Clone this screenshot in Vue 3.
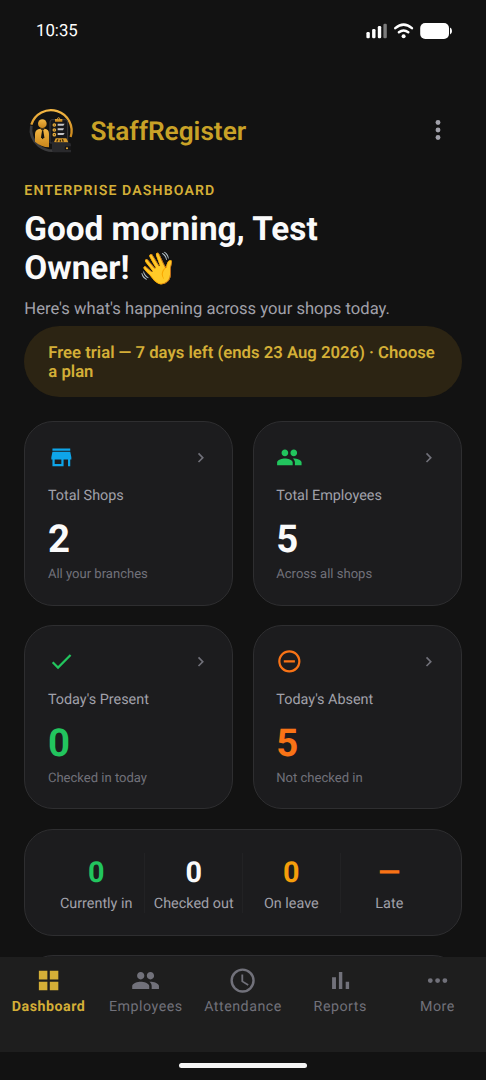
<script setup>
const paths = {
  store: 'M12,18H6V14H12M21,14V12L20,7H4L3,12V14H4V20H14V14H18V20H20V14M20,4H4V6H20V4Z',
  people:
    'M16 11c1.66 0 2.99-1.34 2.99-3S17.66 5 16 5c-1.66 0-3 1.34-3 3s1.34 3 3 3zm-8 0c1.66 0 2.99-1.34 2.99-3S9.66 5 8 5C6.34 5 5 6.34 5 8s1.34 3 3 3zm0 2c-2.33 0-7 1.17-7 3.5V19h14v-2.5c0-2.33-4.67-3.5-7-3.5zm8 0c-.29 0-.62.02-.97.05 1.16.84 1.97 1.97 1.97 3.45V19h6v-2.5c0-2.33-4.67-3.5-7-3.5z',
  check: 'M21,7L9,19L3.5,13.5L4.91,12.09L9,16.17L19.59,5.59L21,7Z',
  minus:
    'M12,20C7.59,20 4,16.41 4,12C4,7.59 7.59,4 12,4C16.41,4 20,7.59 20,12C20,16.41 16.41,20 12,20M12,2A10,10 0 0,0 2,12A10,10 0 0,0 12,22A10,10 0 0,0 22,12A10,10 0 0,0 12,2M7,13H17V11H7',
  chevron: 'M8.59,16.58L13.17,12L8.59,7.41L10,6L16,12L10,18L8.59,16.58Z',
  grid: 'M4,4H11V11H4M13,4H20V11H13M4,13H11V20H4M13,13H20V20H13',
  clock:
    'M12,20A8,8 0 0,0 20,12A8,8 0 0,0 12,4A8,8 0 0,0 4,12A8,8 0 0,0 12,20M12,2A10,10 0 0,1 22,12A10,10 0 0,1 12,22C6.47,22 2,17.5 2,12A10,10 0 0,1 12,2M12.5,7V12.25L17,14.92L16.25,16.15L11,13V7H12.5Z',
  chart: 'M5 9.2h3.2V19H5V9.2zM10.6 5h2.8v14h-2.8V5zm5.6 8H19v6h-2.8v-6z',
  more: 'M16,12A2,2 0 0,1 18,10A2,2 0 0,1 20,12A2,2 0 0,1 18,14A2,2 0 0,1 16,12M10,12A2,2 0 0,1 12,10A2,2 0 0,1 14,12A2,2 0 0,1 12,14A2,2 0 0,1 10,12M4,12A2,2 0 0,1 6,10A2,2 0 0,1 8,12A2,2 0 0,1 6,14A2,2 0 0,1 4,12Z',
}

const cards = [
  { icon: 'store', tone: 'blue', label: 'Total Shops', value: '2', valueTone: 'white', note: 'All your branches' },
  { icon: 'people', tone: 'green', label: 'Total Employees', value: '5', valueTone: 'white', note: 'Across all shops' },
  { icon: 'check', tone: 'green', label: "Today's Present", value: '0', valueTone: 'green', note: 'Checked in today' },
  { icon: 'minus', tone: 'orange', label: "Today's Absent", value: '5', valueTone: 'orange', note: 'Not checked in' },
]

const stats = [
  { value: '0', tone: 'green', label: 'Currently in' },
  { value: '0', tone: 'white', label: 'Checked out' },
  { value: '0', tone: 'amber', label: 'On leave' },
  { value: '—', tone: 'orange', label: 'Late' },
]

const tabs = [
  { icon: 'grid', label: 'Dashboard', active: true },
  { icon: 'people', label: 'Employees' },
  { icon: 'clock', label: 'Attendance' },
  { icon: 'chart', label: 'Reports' },
  { icon: 'more', label: 'More' },
]
</script>

<template>
  <div class="screen">
    <div class="status">
      <span class="time">10:35</span>
      <svg class="status-icons" width="88" height="18" viewBox="0 0 88 18">
        <g fill="#fff">
          <rect x="1.4" y="10" width="3.4" height="6.2" rx="1.3" />
          <rect x="7.1" y="7" width="3.4" height="9.2" rx="1.3" />
          <rect x="12.8" y="4" width="3.4" height="12.2" rx="1.3" />
          <rect x="18.4" y="1.8" width="3.4" height="14.4" rx="1.3" fill="#7c7c7c" />
          <circle cx="38.6" cy="14.2" r="2" />
          <rect x="55.2" y="1" width="28.8" height="16" rx="5" />
          <path d="M85 5.4q2 .6 2 3.6t-2 3.6z" />
        </g>
        <g fill="none" stroke="#fff" stroke-width="2.5" stroke-linecap="round">
          <path d="M30.3 6.1Q38.6-.8 46.9 6.1" />
          <path d="M33.9 10.3q4.7-3.7 9.4 0" />
        </g>
      </svg>
    </div>

    <header class="header">
      <svg class="logo" width="48" height="48" viewBox="21 18 144 144">
        <defs>
          <linearGradient id="gold" x1="0" y1="0" x2="0" y2="1">
            <stop offset="0" stop-color="#f4b744" />
            <stop offset="1" stop-color="#c9861b" />
          </linearGradient>
        </defs>
        <path d="M34 74A61 61 0 1 1 152 111" fill="none" stroke="url(#gold)" stroke-width="7" />
        <path d="M34 77Q27 112 57 138Q77 153 100 152" fill="none" stroke="#3b3b3d" stroke-width="8" />
        <circle cx="67" cy="71" r="13" fill="url(#gold)" />
        <path d="M45 125V101Q46 88 61 86H74Q87 87 87 101V142Q63 141 45 125Z" fill="url(#gold)" />
        <path d="M61 86h13l-6 8z" fill="#3a2a12" />
        <path d="M66 93h4l3 19-5 6-5-6z" fill="#16130f" />
        <path d="M96 59H136Q143 59 143 66V129H90V66Q90 59 96 59Z" fill="#17171a" stroke="#39393c" stroke-width="3" />
        <path d="M105 65V57H111Q116 46 121 57H127V65Z" fill="url(#gold)" />
        <circle cx="116" cy="56" r="2" fill="#2a2012" />
        <g fill="#e9ae3c">
          <circle cx="103" cy="75" r="5.5" />
          <circle cx="103" cy="90" r="5.5" />
          <circle cx="103" cy="104" r="5.5" />
        </g>
        <g fill="#3c2b12">
          <circle cx="103" cy="75" r="1.8" />
          <circle cx="103" cy="90" r="1.8" />
          <circle cx="103" cy="104" r="1.8" />
        </g>
        <g fill="#c4c4c6">
          <path d="M113 71h21l-4 6h-17zM113 85h19l-3 6h-16zM113 99h21l-4 6h-17z" />
        </g>
        <path d="M102 127L107 115H139L145 127Z" fill="#d99b2c" />
        <path d="M110 125l4-7m7 7v-6m9 6l-3-7" stroke="#3b290d" stroke-width="4" />
        <path d="M98 123Q101 129 111 128H148Q153 128 153 134V157H101Q96 157 96 151V127Z" fill="#29292c" />
        <path d="M136 139H153V150H136Q131 144 136 139Z" fill="#151517" />
        <circle cx="141" cy="145" r="3" fill="#f0ae35" />
      </svg>
      <span class="brand">StaffRegister</span>
      <svg class="kebab" width="30" height="30" viewBox="-.33 -.33 24.66 24.66">
        <circle cx="12" cy="5.8" r="2" />
        <circle cx="12" cy="12" r="2" />
        <circle cx="12" cy="18.2" r="2" />
      </svg>
    </header>

    <main class="content">
      <div class="eyebrow">ENTERPRISE DASHBOARD</div>
      <h1 class="greeting">Good morning, Test<br />Owner! <span class="wave">👋</span></h1>
      <p class="sub">Here's what's happening across your shops today.</p>
      <div class="banner">Free trial — 7 days left (ends 23 Aug 2026) · Choose<br />a plan</div>

      <div class="cards">
        <section v-for="c in cards" :key="c.label" class="card">
          <div class="card-top">
            <svg :class="['card-icon', c.tone]" viewBox="0 0 24 24"><path :d="paths[c.icon]" /></svg>
            <svg class="chevron" viewBox="0 0 24 24"><path :d="paths.chevron" /></svg>
          </div>
          <div class="card-label">{{ c.label }}</div>
          <div :class="['card-value', c.valueTone]">{{ c.value }}</div>
          <div class="card-note">{{ c.note }}</div>
        </section>
      </div>

      <section class="stats">
        <div v-for="s in stats" :key="s.label" class="stat">
          <div :class="['stat-value', s.tone]">{{ s.value }}</div>
          <div class="stat-label">{{ s.label }}</div>
        </div>
      </section>
      <section class="next-card"></section>
    </main>

    <nav class="tabs">
      <div v-for="t in tabs" :key="t.label" :class="['tab', { active: t.active }]">
        <svg class="tab-icon" viewBox="0 0 24 24"><path :d="paths[t.icon]" /></svg>
        <span>{{ t.label }}</span>
      </div>
    </nav>
    <div class="home"><div class="home-bar"></div></div>
  </div>
</template>

<style>
body {
  background: #121212;
}
</style>

<style scoped>
.screen {
  width: 486px;
  height: 1080px;
  overflow: hidden;
  display: flex;
  flex-direction: column;
  background: #121212;
  color: #fafafa;
  font-family: Roboto, sans-serif;
  text-rendering: geometricPrecision;
  box-sizing: border-box;
}
.screen * {
  box-sizing: border-box;
}
svg {
  display: block;
  flex: none;
  fill: currentColor;
}
.status {
  height: 62px;
  padding: 0 33px 0 36px;
  display: flex;
  justify-content: space-between;
  flex: none;
}
.time {
  margin-top: 20px;
  font-size: 16.8px;
  line-height: 22px;
  color: #fff;
}
.status-icons {
  margin-top: 22px;
}
.header {
  height: 112px;
  flex: none;
  padding: 24px 33px 0 27px;
  display: flex;
  align-items: center;
}
.brand {
  margin-left: 15.5px;
  margin-top: 4px;
  font-size: 26.2px;
  font-weight: 600;
  line-height: 32px;
  color: #c9a227;
}
.kebab {
  margin-left: auto;
  color: #a1a1aa;
}
.content {
  flex: 1;
  min-height: 0;
  overflow: hidden;
  padding: 8px 24.3px 0;
}
.eyebrow {
  font-size: 14.1px;
  line-height: 18px;
  font-weight: 600;
  letter-spacing: 1.13px;
  color: #d4af37;
  white-space: nowrap;
}
.greeting {
  margin: 10px 0 0;
  height: 78px;
  font-size: 33.3px;
  line-height: 39px;
  font-weight: 700;
  color: #fafafa;
  white-space: nowrap;
}
.wave {
  margin-left: 1px;
  font-family: "Noto Color Emoji", Roboto, sans-serif;
  font-size: 31.5px;
  line-height: 30px;
  font-weight: 400;
}
.sub {
  margin: 11px 0 0;
  font-size: 16.6px;
  line-height: 21px;
  color: #a1a1aa;
  white-space: nowrap;
}
.banner {
  margin-top: 6px;
  height: 71px;
  padding: 17.6px 24px;
  border-radius: 36px;
  background: #2c2413;
  color: #d4af37;
  font-size: 16.7px;
  line-height: 19.6px;
  font-weight: 600;
  white-space: nowrap;
}
.cards {
  margin-top: 24px;
  display: grid;
  grid-template-columns: 1fr 1fr;
  gap: 19.4px;
}
.card {
  height: 184.5px;
  padding: 22px 22.6px;
  border: 1.4px solid #2e2e30;
  border-radius: 29px;
  background: #1c1c1e;
}
.card-top {
  display: flex;
  justify-content: space-between;
  align-items: center;
}
.card-icon {
  width: 26.7px;
  height: 26.7px;
}
.chevron {
  width: 19.4px;
  height: 19.4px;
  margin-right: -0.5px;
  color: #71717a;
}
.card-label {
  margin-top: 15px;
  font-size: 14.4px;
  line-height: 19px;
  color: #a1a1aa;
}
.card-value {
  margin-top: 11px;
  font-size: 38.4px;
  line-height: 48px;
  font-weight: 700;
}
.card-note {
  margin-top: 2px;
  font-size: 13.05px;
  line-height: 17px;
  color: #71717a;
}
.stats {
  margin-top: 19.4px;
  height: 107.5px;
  padding: 23px 22.6px;
  border: 1.4px solid #2e2e30;
  border-radius: 29px;
  background: #1c1c1e;
  display: grid;
  grid-template-columns: repeat(4, 1fr);
}
.stat {
  text-align: center;
  border-right: 1px solid #222224;
}
.stat:last-child {
  border-right: none;
}
.stat-value {
  margin-top: 3px;
  font-size: 28.8px;
  line-height: 34px;
  font-weight: 700;
}
.stat-label {
  margin-top: 4.3px;
  font-size: 14.4px;
  line-height: 19px;
  color: #a1a1aa;
  white-space: nowrap;
}
.next-card {
  margin-top: 18.9px;
  height: 60px;
  border: 1.4px solid #2e2e30;
  border-radius: 29px;
  background: #1c1c1e;
}
.tabs {
  flex: none;
  height: 94.5px;
  background: #1e1e1e;
  display: grid;
  grid-template-columns: repeat(5, 1fr);
  padding-top: 9px;
}
.tab {
  display: flex;
  flex-direction: column;
  align-items: center;
  color: #71717a;
  font-size: 14.25px;
  line-height: 18px;
  letter-spacing: 0.5px;
}
.tab span {
  margin-top: 3px;
}
.tab.active {
  color: #d4af37;
  font-weight: 700;
}
.tab-icon {
  width: 29.2px;
  height: 29.2px;
}
.home {
  flex: none;
  height: 28.5px;
  padding-top: 11.5px;
}
.home-bar {
  width: 128px;
  height: 5px;
  margin: 0 auto;
  border-radius: 3px;
  background: #f5f5f5;
}
.blue {
  color: #0ea5e9;
}
.green {
  color: #22c55e;
}
.orange {
  color: #f97316;
}
.amber {
  color: #f59e0b;
}
.white {
  color: #fafafa;
}
</style>
